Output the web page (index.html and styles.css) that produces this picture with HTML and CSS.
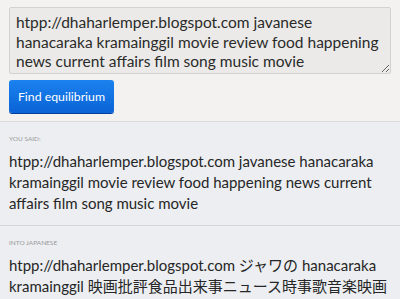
FILE: index.html
```html
<!DOCTYPE html>
<html lang="en">

<head>
  <meta charset="UTF-8">
  <meta name="viewport" content="width=device-width, initial-scale=1.0">
  <title>Translation Party</title>
  <link rel="stylesheet" href="styles.css">
</head>

<body>
  <!-- Input box and submit button -->
  <div class="input-area">
    <textarea class="phrase" spellcheck="true">htpp://dhaharlemper.blogspot.com javanese hanacaraka kramainggil movie review food happening news current affairs film song music movie</textarea>
    <button class="find-btn" type="button">Find equilibrium</button>
  </div>

  <!-- Translation steps -->
  <div class="step">
    <div class="step-label">You said:</div>
    <div class="step-text">htpp://dhaharlemper.blogspot.com javanese hanacaraka kramainggil movie review food happening news current affairs film song music movie</div>
  </div>

  <div class="step">
    <div class="step-label">Into Japanese</div>
    <div class="step-text">htpp://dhaharlemper.blogspot.com ジャワの hanacaraka kramainggil 映画批評食品出来事ニュース時事歌音楽映画</div>
  </div>
</body>

</html>
```

FILE: styles.css
```css
* {
  margin: 0;
  padding: 0;
  box-sizing: border-box;
  font-family: 'Lato', 'Noto Sans CJK JP', sans-serif;
}

body {
  background-color: #eceef1;
  width: 400px;
  height: 299px;
  overflow: hidden;
}

.input-area {
  background-color: #f3f2f1;
  padding: 7px 9px 8px;
  display: flex;
  flex-direction: column;
  align-items: flex-start;
  border-bottom: 1px solid #dcdbdb;
}

.phrase {
  width: 382px;
  height: 67px;
  padding: 5px 6px;
  background-color: #ebeae8;
  border: 1px solid #d3d2d0;
  border-radius: 2px;
  font-size: 15.5px;
  line-height: 19.5px;
  color: #2a2a2a;
  resize: vertical;
  overflow: hidden;
}

.find-btn {
  margin-top: 6px;
  width: 105px;
  height: 33px;
  border: none;
  border-radius: 3px;
  background: linear-gradient(#1b82ee, #0a63d6);
  box-shadow: 0 1px 0 #07409a;
  color: #fff;
  font-size: 12.3px;
}

.step {
  padding: 13px 5px 11px 9px;
  border-bottom: 1px solid #d6d6d8;
}

.step-label {
  font-size: 6.5px;
  line-height: 8px;
  text-transform: uppercase;
  color: #9a9a9a;
  margin-bottom: 8px;
}

.step-text {
  font-size: 15px;
  line-height: 21px;
  color: #262626;
}
```
